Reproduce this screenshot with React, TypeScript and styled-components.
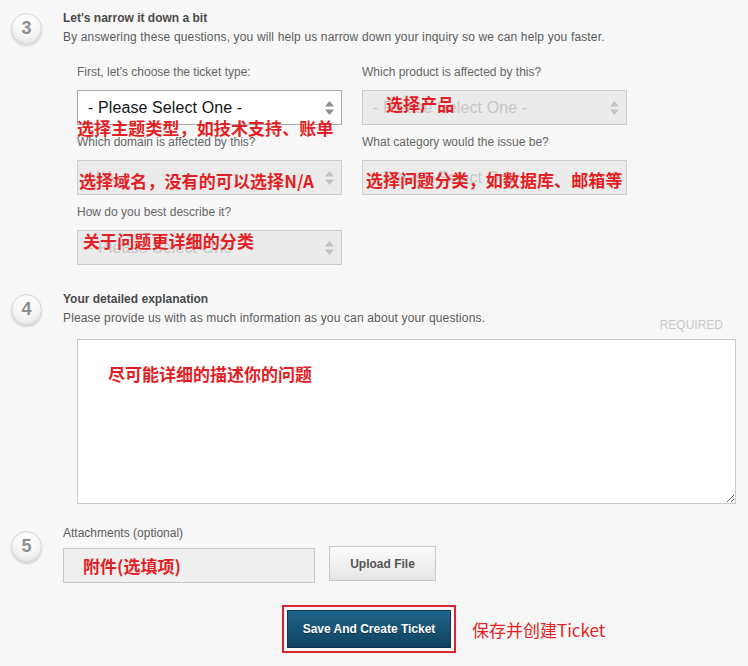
import styled, { createGlobalStyle } from 'styled-components'

const GlobalStyle = createGlobalStyle`
  html, body {
    margin: 0;
    padding: 0;
    background: #f7f7f7;
  }
  body {
    font-family: 'Liberation Sans', Arial, sans-serif;
    font-size: 12px;
    color: #555;
  }
`

interface ISelect {
  value: string
  disabled?: boolean
  note?: string
  noteTop?: number
  noteLeft?: number
}

const Arrows = ({ disabled }: { disabled?: boolean }) => (
  <svg width="9" height="14" viewBox="0 0 9 14">
    <path d="M0 5.5 L4.5 0 L9 5.5 Z M0 8.5 L9 8.5 L4.5 14 Z" fill={disabled ? '#c2c2c2' : '#8c8c8c'} />
  </svg>
)

const Select = ({ value, disabled, note, noteTop = 0, noteLeft = 0 }: ISelect) => (
  <StyledSelect $disabled={disabled}>
    <span>{value}</span>
    <Arrows disabled={disabled} />
    {note && (
      <Note $top={noteTop} $left={noteLeft}>
        {note}
      </Note>
    )}
  </StyledSelect>
)

const Field = ({ label, ...rest }: ISelect & { label: string }) => (
  <StyledField>
    <FieldLabel>{label}</FieldLabel>
    <Select {...rest} />
  </StyledField>
)

const App = () => {
  return (
    <Page>
      <GlobalStyle />

      <Step>
        <Badge $offset={3}>3</Badge>
        <StepBody>
          <Title>Let's narrow it down a bit</Title>
          <Text>By answering these questions, you will help us narrow down your inquiry so we can help you faster.</Text>
          <FieldGrid>
            <Field
              label="First, let's choose the ticket type:"
              value="- Please Select One -"
              note="选择主题类型，如技术支持、账单"
              noteTop={27}
              noteLeft={-1}
            />
            <Field
              label="Which product is affected by this?"
              value="- Please Select One -"
              disabled
              note="选择产品"
              noteTop={3}
              noteLeft={23}
            />
            <Field
              label="Which domain is affected by this?"
              value="N/A"
              disabled
              note="选择域名，没有的可以选择N/A"
              noteTop={10}
              noteLeft={1}
            />
            <Field
              label="What category would the issue be?"
              value="- Please Select One -"
              disabled
              note="选择问题分类，如数据库、邮箱等"
              noteTop={9}
              noteLeft={3}
            />
            <Field
              label="How do you best describe it?"
              value="- Please Select One -"
              disabled
              note="关于问题更详细的分类"
              noteTop={0}
              noteLeft={5}
            />
          </FieldGrid>
        </StepBody>
      </Step>

      <Step $gap={26}>
        <Badge $offset={3}>4</Badge>
        <StepBody>
          <Title>Your detailed explanation</Title>
          <HeaderRow>
            <Text>Please provide us with as much information as you can about your questions.</Text>
            <Required>REQUIRED</Required>
          </HeaderRow>
          <TextareaWrap>
            <StyledTextarea />
            <Note $top={25} $left={31}>尽可能详细的描述你的问题</Note>
          </TextareaWrap>
        </StepBody>
      </Step>

      <Step $gap={21}>
        <Badge $offset={6}>5</Badge>
        <StepBody>
          <FieldText>Attachments (optional)</FieldText>
          <UploadRow>
            <FileInput>
              <Note $top={7} $left={19}>附件(选填项)</Note>
            </FileInput>
            <UploadButton>Upload File</UploadButton>
          </UploadRow>
        </StepBody>
      </Step>

      <SaveRow>
        <Highlight>
          <SaveButton>Save And Create Ticket</SaveButton>
        </Highlight>
        <SaveNote>保存并创建Ticket</SaveNote>
      </SaveRow>
    </Page>
  )
}

export default App

const Page = styled.div`
  width: 748px;
  height: 666px;
  padding: 10px 12px 0 11px;
  box-sizing: border-box;
  overflow: hidden;
`

const Step = styled.div<{ $gap?: number }>`
  display: flex;
  align-items: flex-start;
  margin-top: ${({ $gap }) => $gap ?? 0}px;
`

const Badge = styled.div<{ $offset: number }>`
  flex: none;
  width: 31px;
  height: 31px;
  margin-top: ${({ $offset }) => $offset}px;
  margin-right: 21px;
  box-sizing: border-box;
  border-radius: 50%;
  border: 1px solid #d6d6d6;
  background: radial-gradient(circle at 50% 30%, #ffffff 0%, #f6f6f6 50%, #e2e2e2 100%);
  box-shadow: 0 2px 2px rgba(0, 0, 0, 0.14);
  display: flex;
  align-items: center;
  justify-content: center;
  font-size: 18px;
  font-weight: bold;
  color: #8f8f8f;
`

const StepBody = styled.div`
  flex: 1;
  min-width: 0;
`

const Title = styled.div`
  font-size: 12px;
  line-height: 16px;
  font-weight: bold;
  color: #4a4a4a;
`

const Text = styled.div`
  margin-top: 3px;
  font-size: 12px;
  line-height: 16px;
  letter-spacing: 0.15px;
  color: #5a5a5a;
`

const FieldText = styled.div`
  font-size: 12px;
  line-height: 16px;
  color: #5a5a5a;
`

const FieldGrid = styled.div`
  display: grid;
  grid-template-columns: 265px 265px;
  column-gap: 20px;
  row-gap: 9px;
  margin: 19px 0 0 14px;
`

const StyledField = styled.div`
  display: flex;
  flex-direction: column;
`

const FieldLabel = styled.div`
  font-size: 12px;
  line-height: 16px;
  color: #666;
  margin-bottom: 10px;
`

const StyledSelect = styled.div<{ $disabled?: boolean }>`
  position: relative;
  height: 35px;
  box-sizing: border-box;
  display: flex;
  align-items: center;
  justify-content: space-between;
  padding: 0 7px 0 10px;
  border: 1px solid ${({ $disabled }) => ($disabled ? '#cccccc' : '#a9a9a9')};
  background: ${({ $disabled }) => ($disabled ? '#ebebeb' : '#ffffff')};
  color: ${({ $disabled }) => ($disabled ? '#c6c6c6' : '#151515')};
  font-size: 16px;
  letter-spacing: 0.1px;
  white-space: nowrap;
`

const Note = styled.span<{ $top: number; $left: number }>`
  position: absolute;
  top: ${({ $top }) => $top}px;
  left: ${({ $left }) => $left}px;
  font-family: 'Noto Sans CJK SC', sans-serif;
  font-size: 17px;
  line-height: 20px;
  font-weight: bold;
  color: #e31e24;
  white-space: nowrap;
  pointer-events: none;
  z-index: 1;
`

const HeaderRow = styled.div`
  display: flex;
  justify-content: space-between;
  align-items: flex-start;
`

const Required = styled.div`
  padding-top: 10px;
  margin-right: 13px;
  font-size: 12px;
  line-height: 16px;
  color: #c8c8c8;
`

const TextareaWrap = styled.div`
  position: relative;
  margin: 6px 0 0 14px;
  height: 165px;
`

const StyledTextarea = styled.textarea`
  display: block;
  width: 100%;
  height: 100%;
  box-sizing: border-box;
  border: 1px solid #c9c9c9;
  background: #fff;
  resize: both;
  outline: none;
`

const UploadRow = styled.div`
  display: flex;
  align-items: flex-start;
  gap: 14px;
  margin-top: 5px;
`

const FileInput = styled.div`
  position: relative;
  width: 252px;
  height: 35px;
  margin-top: 2px;
  box-sizing: border-box;
  border: 1px solid #c8c8c8;
  background: #efefef;
`

const UploadButton = styled.button`
  width: 107px;
  height: 35px;
  border: 1px solid #c9c9c9;
  background: linear-gradient(#fbfbfb, #e5e5e5);
  font-family: 'Liberation Sans', Arial, sans-serif;
  font-size: 12px;
  font-weight: bold;
  color: #555;
  cursor: pointer;
`

const SaveRow = styled.div`
  display: flex;
  align-items: center;
  gap: 16px;
  margin-top: 22px;
  padding-left: 271px;
`

const Highlight = styled.div`
  border: 2px solid #d9262c;
  padding: 3px;
`

const SaveButton = styled.button`
  display: block;
  width: 164px;
  height: 38px;
  border: 1px solid #0b3850;
  background: linear-gradient(#21658a, #0e4360);
  font-family: 'Liberation Sans', Arial, sans-serif;
  font-size: 12px;
  font-weight: bold;
  color: #fff;
  text-shadow: 0 1px 1px rgba(0, 0, 0, 0.4);
  cursor: pointer;
`

const SaveNote = styled.span`
  font-family: 'Noto Sans CJK SC', sans-serif;
  font-size: 17px;
  color: #e31e24;
  white-space: nowrap;
`
